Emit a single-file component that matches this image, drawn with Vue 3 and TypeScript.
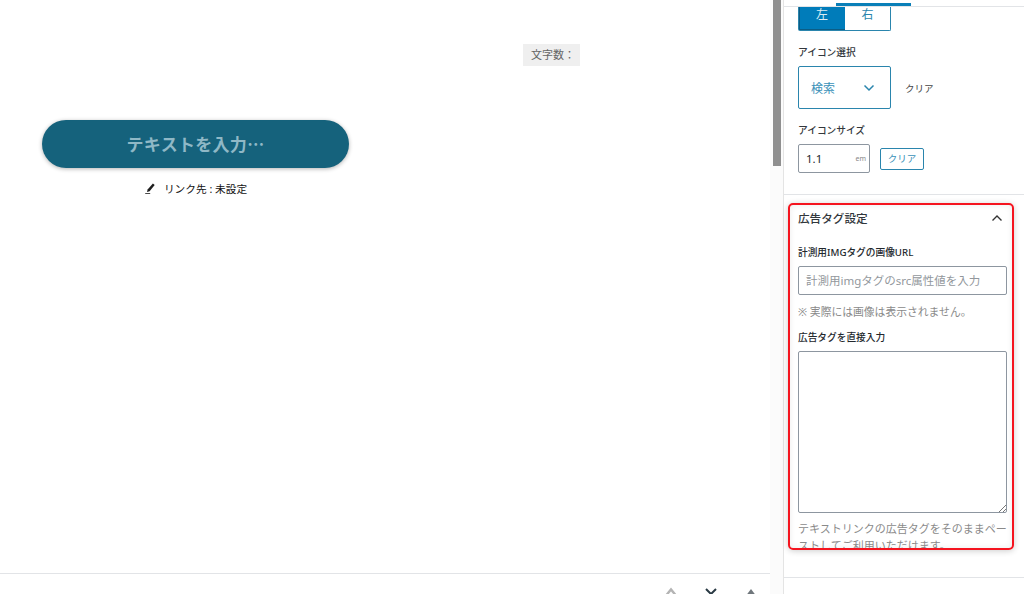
<script setup lang="ts">
const actions = ['up', 'close', 'down']
</script>

<template>
  <div class="page">
    <main class="canvas">
      <div class="canvas-body">
        <div class="count-row"><span class="count">文字数：</span></div>
        <div class="cta">テキストを入力…</div>
        <div class="link">
          <svg class="pen" width="12" height="12" viewBox="0 0 12 12">
            <path d="M3.6 7.6 8.9 1.6 10.7 3.1 5.6 9.2 3 10z" fill="#1e1e1e" />
            <path d="M1.2 11h5v.8h-5z" fill="#1e1e1e" />
          </svg>
          <span>リンク先 : 未設定</span>
        </div>
      </div>
      <div class="toolbar">
        <svg v-for="a in actions" :key="a" class="tool" width="16" height="8" viewBox="0 0 16 8">
          <path v-if="a === 'up'" d="M3.5 8 8 2.5 12.5 8" fill="none" stroke="#b4b4b4" stroke-width="2.4" />
          <path v-else-if="a === 'close'" d="M3 2 13 12M13 2 3 12" fill="none" stroke="#2a3a44" stroke-width="2" />
          <path v-else d="M3.500 8 8 2 12.500 8z" fill="#70777c" />
        </svg>
      </div>
    </main>
    <div class="scrollbar"><div class="thumb"></div></div>
    <aside class="sidebar">
      <div class="tabs"><span class="tab-active"></span></div>
      <section class="icon-section">
        <div class="segment">
          <span class="seg seg-on">左</span>
          <span class="seg">右</span>
        </div>
        <div class="label label-icon">アイコン選択</div>
        <div class="select-row">
          <div class="select">
            <span>検索</span>
            <svg width="12" height="8" viewBox="0 0 12 8">
              <path d="M1.500 1.500 6 6l4.500-4.500" fill="none" stroke="#2a85ad" stroke-width="1.500" />
            </svg>
          </div>
          <span class="clear-text">クリア</span>
        </div>
        <div class="label label-size">アイコンサイズ</div>
        <div class="size-row">
          <div class="size-input"><span class="size-value">1.1</span><span class="unit">em</span></div>
          <span class="clear-btn">クリア</span>
        </div>
      </section>
      <section class="ad-panel">
        <div class="ad-head">
          <h2>広告タグ設定</h2>
          <svg width="12" height="8" viewBox="0 0 12 8">
            <path d="M1.500 6.500 6 2l4.500 4.500" fill="none" stroke="#333" stroke-width="1.400" />
          </svg>
        </div>
        <label class="field-label">計測用IMGタグの画像URL</label>
        <div class="text-input">計測用imgタグのsrc属性値を入力</div>
        <p class="help help-short">※ 実際には画像は表示されません。</p>
        <label class="field-label direct">広告タグを直接入力</label>
        <div class="textarea">
          <svg class="grip" width="8" height="8" viewBox="0 0 8 8">
            <path d="M1 8 8 1M5 8l3-3" stroke="#777" stroke-width="1" fill="none" />
          </svg>
        </div>
        <p class="help help-long">テキストリンクの広告タグをそのままペーストしてご利用いただけます。</p>
      </section>
      <div class="end-rule"></div>
    </aside>
  </div>
</template>

<style>
html, body { margin: 0; background: #fff; }
</style>

<style scoped>
.page {
  display: flex;
  width: 1024px;
  height: 594px;
  overflow: hidden;
  background: #fff;
  font-family: "Noto Sans", "Noto Sans CJK JP", sans-serif;
  color: #1e1e1e;
}
.canvas {
  width: 770px;
  height: 594px;
  overflow: hidden;
  display: flex;
  flex-direction: column;
  flex: none;
}
.canvas-body {
  flex: none;
  height: 574px;
  box-sizing: border-box;
  padding: 44px 0 0 42px;
  border-bottom: 1px solid #e2e4e7;
}
.count-row { display: flex; justify-content: flex-end; padding-right: 190px; }
.count {
  width: 57px;
  height: 22px;
  box-sizing: border-box;
  padding-left: 8px;
  background: #efefef;
  color: #666;
  font-size: 11px;
  line-height: 21px;
}
.cta {
  width: 307px;
  height: 48px;
  margin-top: 54px;
  border-radius: 24px;
  background: #15627c;
  box-shadow: 0 1px 4px rgba(0, 0, 0, .3);
  color: #8fb8c6;
  font-family: "Noto Sans CJK JP", sans-serif;
  font-size: 17px;
  font-weight: 700;
  line-height: 47px;
  text-align: center;
  letter-spacing: .3px;
}
.link {
  width: 307px;
  display: flex;
  justify-content: center;
  align-items: center;
  gap: 8px;
  margin-top: 13px;
  font-size: 10.700px;
  color: #111;
  line-height: 16px;
}
.pen { margin-top: -2px; }
.toolbar {
  display: flex;
  justify-content: flex-end;
  gap: 24px;
  padding: 13px 11px 0 0;
}
.tool { flex: none; overflow: visible; }
.scrollbar {
  width: 14px;
  flex: none;
  padding-left: 3px;
  box-sizing: border-box;
  background: #fbfbfb;
}
.thumb { width: 8px; height: 166px; background: #8f8f8f; }
.sidebar {
  flex: 1;
  min-width: 0;
  border-left: 1px solid #e4e4e4;
  margin-left: -1px;
  position: relative;
}
.tabs {
  height: 7px;
  box-sizing: border-box;
  border-bottom: 1px solid #e2e4e7;
  position: relative;
}
.tab-active {
  position: absolute;
  left: 52px;
  top: 3px;
  width: 75px;
  height: 3px;
  background: #0a7fb8;
}
.icon-section {
  height: 188px;
  box-sizing: border-box;
  padding: 0 0 0 14px;
  border-bottom: 1px solid #e2e4e7;
}
.segment {
  display: flex;
  width: 93px;
  height: 24px;
  box-sizing: border-box;
  border: 1px solid #2a85ad;
  border-top: 0;
  border-radius: 0 0 2px 2px;
}
.seg {
  flex: 1;
  color: #2a85ad;
  font-size: 12px;
  line-height: 16px;
  text-align: center;
}
.seg-on {
  flex: none;
  width: 46px;
  background: #007cba;
  color: #dcecf4;
  box-shadow: inset 0 -1px 0 #0b5d86, inset 1px 0 0 #0b5d86;
}
.label {
  font-size: 9.700px;
  font-weight: 500;
  line-height: 16px;
  color: #32373c;
}
.label-icon { margin-top: 14px; }
.select-row {
  display: flex;
  align-items: center;
  gap: 14px;
  margin-top: 5px;
}
.select {
  width: 93px;
  height: 43px;
  box-sizing: border-box;
  display: flex;
  justify-content: space-between;
  align-items: center;
  padding: 0 15px 0 12px;
  border: 1px solid #2a85ad;
  border-radius: 2px;
  color: #3a91b8;
  font-size: 12px;
}
.clear-text { font-size: 9.500px; color: #444; }
.label-size { margin-top: 14px; }
.size-row {
  display: flex;
  align-items: center;
  gap: 10px;
  margin-top: 5px;
}
.size-input {
  width: 72px;
  height: 29px;
  box-sizing: border-box;
  display: flex;
  justify-content: space-between;
  align-items: center;
  padding: 0 3px 0 7px;
  border: 1px solid #8d96a0;
  border-radius: 2px;
}
.size-value { font-size: 11.500px; color: #23282d; }
.unit { font-size: 7px; color: #888; }
.clear-btn {
  width: 44px;
  height: 22px;
  box-sizing: border-box;
  border: 1px solid #2a85ad;
  border-radius: 2px;
  color: #3a91b8;
  font-size: 9.500px;
  line-height: 19px;
  text-align: center;
}
.ad-panel {
  width: 226px;
  height: 347px;
  box-sizing: border-box;
  margin: 8px 0 0 4px;
  padding: 0 5px 0 8px;
  overflow: hidden;
  border: 2px solid #f5141f;
  border-radius: 5px;
  box-shadow: 0 1px 6px rgba(0, 0, 0, .2), inset 0 0 6px rgba(0, 0, 0, .08);
}
.ad-head {
  display: flex;
  justify-content: space-between;
  align-items: center;
  height: 26px;
  padding-right: 4px;
}
.ad-head h2 {
  margin: 0;
  font-size: 11.600px;
  font-weight: 500;
  color: #32373c;
}
.field-label {
  display: block;
  margin-top: 14px;
  font-size: 9.700px;
  font-weight: 500;
  line-height: 16px;
  color: #23282d;
}
.text-input {
  height: 29px;
  box-sizing: border-box;
  margin-top: 5px;
  padding-left: 7px;
  border: 1px solid #8d96a0;
  border-radius: 2px;
  color: #92979c;
  font-size: 11.500px;
  line-height: 27px;
  white-space: nowrap;
}
.help {
  margin: 0;
  color: #8a8a8a;
  font-size: 10.800px;
  line-height: 17px;
}
.help-short { margin-top: 8px; }
.direct { margin-top: 10px; }
.textarea {
  position: relative;
  height: 162px;
  box-sizing: border-box;
  margin-top: 5px;
  border: 1px solid #8d96a0;
  border-radius: 2px;
}
.grip { position: absolute; right: 0; bottom: 0; }
.help-long { margin-top: 7px; font-size: 11px; }
.end-rule {
  position: absolute;
  left: 0;
  right: 0;
  top: 577px;
  height: 1px;
  background: #e2e4e7;
}
</style>
